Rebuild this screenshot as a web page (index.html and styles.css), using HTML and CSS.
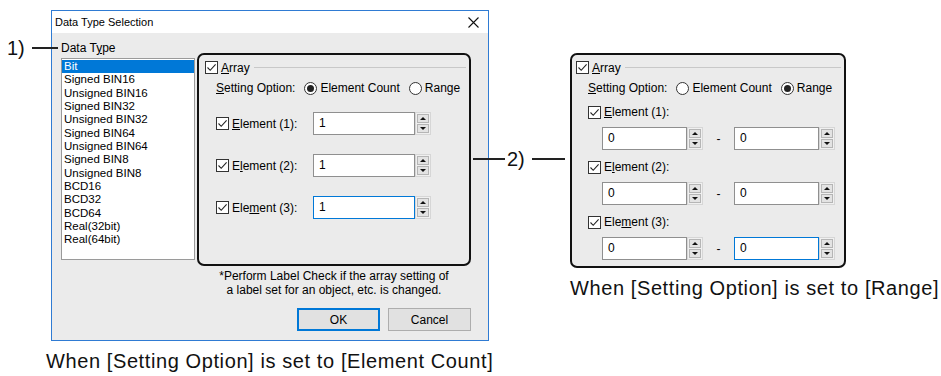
FILE: index.html
```html
<!DOCTYPE html>
<html lang="en">
<head>
    <meta charset="UTF-8">
    <meta name="viewport" content="width=device-width, initial-scale=1.0">
    <title>Data Type Selection - Array</title>
    <link rel="stylesheet" href="styles.css">
</head>
<body>
<div class="figure">

    <!-- Left: dialog in Element Count mode -->
    <div class="fig-left">
        <div class="callout callout-1"><span class="num">1)</span><span class="lead"></span></div>

        <div class="dialog">
            <div class="titlebar">
                <span>Data Type Selection</span>
                <svg class="close" width="11" height="11" viewBox="0 0 11 11"><path d="M0.5 0.5 L10.5 10.5 M10.5 0.5 L0.5 10.5" stroke="#111" stroke-width="1.1" fill="none"/></svg>
            </div>
            <div class="dlg-body">
                <div class="col-left">
                    <div class="lbl">Data T<u>y</u>pe</div>
                    <ul class="listbox">
                        <li class="sel">Bit</li>
                        <li>Signed BIN16</li>
                        <li>Unsigned BIN16</li>
                        <li>Signed BIN32</li>
                        <li>Unsigned BIN32</li>
                        <li>Signed BIN64</li>
                        <li>Unsigned BIN64</li>
                        <li>Signed BIN8</li>
                        <li>Unsigned BIN8</li>
                        <li>BCD16</li>
                        <li>BCD32</li>
                        <li>BCD64</li>
                        <li>Real(32bit)</li>
                        <li>Real(64bit)</li>
                    </ul>
                </div>
                <div class="col-right">
                    <div class="group">
                        <div class="legend">
                            <span class="chk"><svg viewBox="0 0 11 11"><polyline points="1.5,5.5 4.2,8.3 9.6,2.3" fill="none" stroke="#222" stroke-width="1.1"/></svg></span>
                            <span class="legend-text"><u>A</u>rray</span>
                            <span class="rule"></span>
                        </div>
                        <div class="opt-row">
                            <span><u>S</u>etting Option:</span>
                            <span class="radio on"></span><span class="rtext">Element Count</span>
                            <span class="radio second"></span><span class="rtext">Range</span>
                        </div>
                        <div class="el-list">
                            <div class="el-row">
                                <span class="el-label">
                                    <span class="chk"><svg viewBox="0 0 11 11"><polyline points="1.5,5.5 4.2,8.3 9.6,2.3" fill="none" stroke="#222" stroke-width="1.1"/></svg></span>
                                    <span class="ltext"><u>E</u>lement (1):</span>
                                </span>
                                <span class="field"><span class="val">1</span></span>
                                <span class="spin"><span class="up"></span><span class="down"></span></span>
                            </div>
                            <div class="el-row">
                                <span class="el-label">
                                    <span class="chk"><svg viewBox="0 0 11 11"><polyline points="1.5,5.5 4.2,8.3 9.6,2.3" fill="none" stroke="#222" stroke-width="1.1"/></svg></span>
                                    <span class="ltext">E<u>l</u>ement (2):</span>
                                </span>
                                <span class="field"><span class="val">1</span></span>
                                <span class="spin"><span class="up"></span><span class="down"></span></span>
                            </div>
                            <div class="el-row">
                                <span class="el-label">
                                    <span class="chk"><svg viewBox="0 0 11 11"><polyline points="1.5,5.5 4.2,8.3 9.6,2.3" fill="none" stroke="#222" stroke-width="1.1"/></svg></span>
                                    <span class="ltext">Ele<u>m</u>ent (3):</span>
                                </span>
                                <span class="field focus"><span class="val">1</span></span>
                                <span class="spin"><span class="up"></span><span class="down"></span></span>
                            </div>
                        </div>
                    </div>
                    <p class="note">*Perform Label Check if the array setting of<br>a label set for an object, etc. is changed.</p>
                    <div class="buttons">
                        <button type="button" class="btn default">OK</button>
                        <button type="button" class="btn">Cancel</button>
                    </div>
                </div>
            </div>
        </div>

        <p class="caption caption-left">When [Setting Option] is set to [Element Count]</p>
    </div>

    <div class="callout callout-2"><span class="lead"></span><span class="num">2)</span><span class="lead long"></span></div>

    <!-- Right: group box in Range mode -->
    <div class="fig-right">
        <div class="group panel">
            <div class="legend">
                <span class="chk"><svg viewBox="0 0 11 11"><polyline points="1.5,5.5 4.2,8.3 9.6,2.3" fill="none" stroke="#222" stroke-width="1.1"/></svg></span>
                <span class="legend-text"><u>A</u>rray</span>
                <span class="rule"></span>
            </div>
            <div class="opt-row">
                <span><u>S</u>etting Option:</span>
                <span class="radio"></span><span class="rtext">Element Count</span>
                <span class="radio on second"></span><span class="rtext">Range</span>
            </div>

            <div class="range-item">
                <div class="range-label">
                    <span class="chk"><svg viewBox="0 0 11 11"><polyline points="1.5,5.5 4.2,8.3 9.6,2.3" fill="none" stroke="#222" stroke-width="1.1"/></svg></span>
                    <span class="ltext"><u>E</u>lement (1):</span>
                </div>
                <div class="range-row">
                    <span class="field short"><span class="val">0</span></span>
                    <span class="spin"><span class="up"></span><span class="down"></span></span>
                    <span class="dash">-</span>
                    <span class="field short"><span class="val">0</span></span>
                    <span class="spin"><span class="up"></span><span class="down"></span></span>
                </div>
            </div>
            <div class="range-item">
                <div class="range-label">
                    <span class="chk"><svg viewBox="0 0 11 11"><polyline points="1.5,5.5 4.2,8.3 9.6,2.3" fill="none" stroke="#222" stroke-width="1.1"/></svg></span>
                    <span class="ltext">E<u>l</u>ement (2):</span>
                </div>
                <div class="range-row">
                    <span class="field short"><span class="val">0</span></span>
                    <span class="spin"><span class="up"></span><span class="down"></span></span>
                    <span class="dash">-</span>
                    <span class="field short"><span class="val">0</span></span>
                    <span class="spin"><span class="up"></span><span class="down"></span></span>
                </div>
            </div>
            <div class="range-item">
                <div class="range-label">
                    <span class="chk"><svg viewBox="0 0 11 11"><polyline points="1.5,5.5 4.2,8.3 9.6,2.3" fill="none" stroke="#222" stroke-width="1.1"/></svg></span>
                    <span class="ltext">Ele<u>m</u>ent (3):</span>
                </div>
                <div class="range-row">
                    <span class="field short"><span class="val">0</span></span>
                    <span class="spin"><span class="up"></span><span class="down"></span></span>
                    <span class="dash">-</span>
                    <span class="field short focus"><span class="val">0</span></span>
                    <span class="spin"><span class="up"></span><span class="down"></span></span>
                </div>
            </div>
        </div>
        <p class="caption caption-right">When [Setting Option] is set to [Range]</p>
    </div>

</div>
</body>
</html>
```

FILE: styles.css
```css
body {
    margin: 0;
    background-color: #fff;
    color: #000;
    font-family: "Liberation Sans", Arial, sans-serif;
    font-size: 12px;
}

.figure {
    position: relative;
    display: flex;
    align-items: flex-start;
    width: 941px;
    height: 376px;
}

/* Annotation callouts */
.callout {
    position: absolute;
    display: flex;
    align-items: center;
    height: 24px;
}

.callout .num {
    font-size: 20px;
    color: #111;
}

.callout .lead {
    height: 1.5px;
    background-color: #222;
}

.callout-1 {
    left: 7px;
    top: 36px;
}

.callout-1 .lead {
    width: 26px;
    margin-left: 7px;
}

.callout-2 {
    left: 473px;
    top: 147px;
}

.callout-2 .lead {
    width: 32px;
    margin-right: 2px;
}

.callout-2 .lead.long {
    width: 33px;
    margin: 0 0 0 7px;
}

/* Left figure */
.fig-left {
    padding-left: 51px;
    padding-top: 10px;
}

.dialog {
    box-sizing: border-box;
    width: 438px;
    height: 331px;
    border: 1px solid #2f7bd3;
    background-color: #ebebeb;
}

.titlebar {
    display: flex;
    align-items: center;
    justify-content: space-between;
    height: 22px;
    padding: 0 9px 0 3px;
    background-color: #fff;
    font-size: 11px;
}

.dlg-body {
    display: flex;
    padding-left: 9px;
}

.col-left {
    width: 134px;
}

.lbl {
    margin-top: 8px;
    line-height: 14px;
    margin-bottom: 3px;
}

.listbox {
    box-sizing: border-box;
    list-style: none;
    margin: 0;
    padding: 1px 0;
    height: 202px;
    background-color: #fff;
    border: 1px solid #9a9a9a;
    font-size: 11.5px;
}

.listbox li {
    height: 13.33px;
    line-height: 13.33px;
    padding-left: 2px;
    white-space: nowrap;
}

.listbox li.sel {
    background-color: #0078d7;
    color: #fff;
}

.col-right {
    width: 274px;
    margin-left: 2px;
    padding-top: 20px;
}

/* Group box with the black highlight border */
.group {
    box-sizing: border-box;
    height: 213px;
    border: 2px solid #111;
    border-radius: 7px;
    padding: 6px 3px 0 6px;
}

.legend {
    display: flex;
    align-items: center;
    height: 13px;
}

.legend-text {
    margin-left: 3px;
}

.rule {
    flex: 1;
    height: 1px;
    margin-left: 4px;
    background-color: #c8c8c8;
}

.chk {
    box-sizing: border-box;
    display: inline-flex;
    width: 13px;
    height: 13px;
    border: 1px solid #333;
    background-color: #fff;
    flex-shrink: 0;
}

.chk svg {
    width: 11px;
    height: 11px;
}

.opt-row {
    display: flex;
    align-items: center;
    height: 14px;
    margin-top: 7px;
    padding-left: 11px;
    white-space: nowrap;
}

.radio {
    box-sizing: border-box;
    display: inline-flex;
    align-items: center;
    justify-content: center;
    width: 13px;
    height: 13px;
    margin-left: 9px;
    border: 1px solid #333;
    border-radius: 50%;
    background-color: #fff;
}

.radio.second {
    margin-left: 9px;
}

.radio.on::after {
    content: "";
    width: 7px;
    height: 7px;
    border-radius: 50%;
    background-color: #222;
}

.rtext {
    margin-left: 3px;
}

.el-list {
    display: flex;
    flex-direction: column;
    gap: 19px;
    margin-top: 17px;
    padding-left: 11px;
}

.el-row {
    display: flex;
    align-items: center;
    height: 23px;
}

.el-label {
    display: flex;
    align-items: center;
    width: 97px;
}

.ltext {
    margin-left: 3px;
    white-space: nowrap;
}

.field {
    box-sizing: border-box;
    display: flex;
    align-items: center;
    width: 102px;
    height: 23px;
    padding-left: 5px;
    background-color: #fff;
    border: 1px solid #8f8f8f;
}

.field.focus {
    border-color: #0078d7;
}

.field.short {
    width: 85px;
}

.val {
    margin-top: -2px;
}

.spin {
    box-sizing: border-box;
    display: flex;
    flex-direction: column;
    gap: 1px;
    width: 16px;
    height: 23px;
    padding: 1px;
    background-color: #f0f0f0;
    border: 1px solid #d6d6d6;
}

.spin span {
    flex: 1;
    display: flex;
    align-items: center;
    justify-content: center;
    background-color: #e3e3e3;
    border: 1px solid #b5b5b5;
}

.spin .up::after {
    content: "";
    border-left: 3px solid transparent;
    border-right: 3px solid transparent;
    border-bottom: 3px solid #111;
}

.spin .down::after {
    content: "";
    border-left: 3px solid transparent;
    border-right: 3px solid transparent;
    border-top: 3px solid #111;
}

.note {
    margin: 4px 0 0;
    text-align: center;
    line-height: 13.5px;
    white-space: nowrap;
}

.buttons {
    display: flex;
    justify-content: flex-end;
    gap: 8px;
    margin-top: 11px;
}

.btn {
    box-sizing: border-box;
    width: 83px;
    height: 23px;
    padding: 0;
    font-family: inherit;
    font-size: 12px;
    color: #000;
    background-color: #e1e1e1;
    border: 1px solid #adadad;
}

.btn.default {
    border-color: #0078d7;
    box-shadow: inset 0 0 0 1px #0078d7;
}

.caption {
    margin: 8px 0 0;
    font-size: 20px;
    letter-spacing: 0.6px;
    line-height: 24px;
    color: #111;
    white-space: nowrap;
}

.caption-left {
    width: 438px;
    margin-left: -5px;
    text-align: center;
}

/* Right figure */
.fig-right {
    margin-left: 81px;
    padding-top: 53px;
}

.group.panel {
    width: 276px;
    height: 215px;
    padding: 6px 3px 0 4px;
    background-color: #ebebeb;
}

.panel .opt-row {
    padding-left: 12px;
}

.range-item {
    margin-top: 10px;
}

.range-label {
    display: flex;
    align-items: center;
    height: 14px;
    padding-left: 12px;
}

.range-row {
    display: flex;
    align-items: center;
    height: 23px;
    margin-top: 8px;
    padding-left: 26px;
}

.dash {
    width: 31px;
    text-align: center;
}

.caption-right {
    margin-left: 0;
}
```
